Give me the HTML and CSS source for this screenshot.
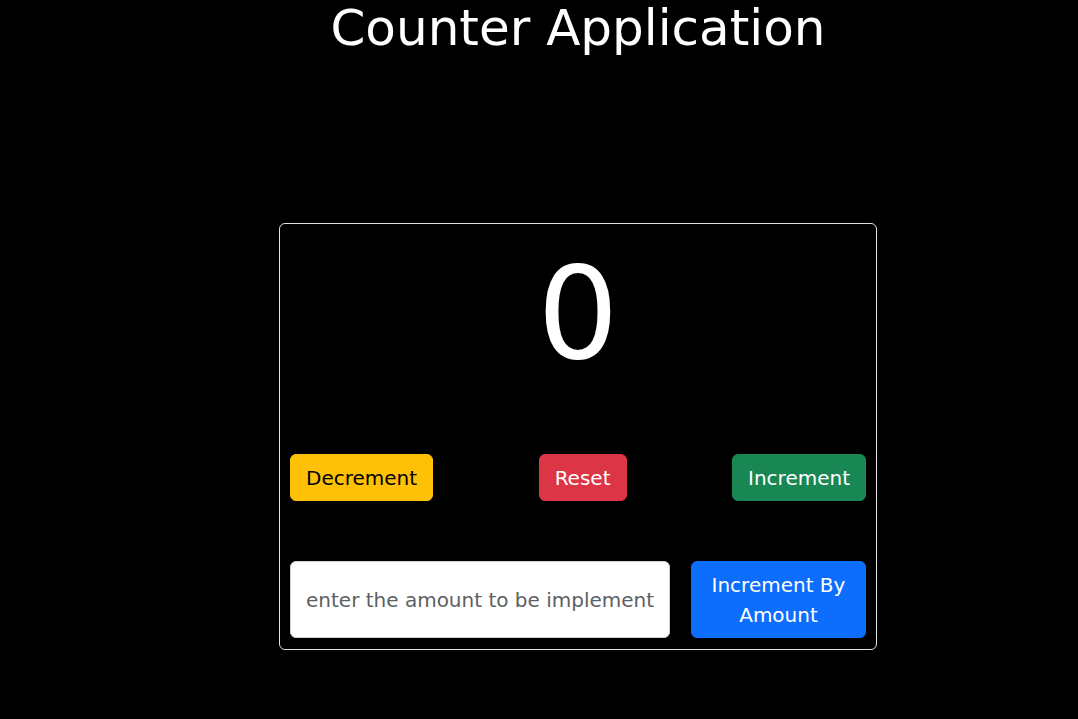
FILE: index.html
```html
<!DOCTYPE html>
<html lang="en">
<head>
<meta charset="utf-8">
<title>Counter Application</title>
<link rel="stylesheet" href="styles.css">
</head>
<body>
<div class="app">
  <h1 class="title">Counter Application</h1>
  <div class="card">
    <div class="count">0</div>
    <div class="controls">
      <button class="btn btn-warning">Decrement</button>
      <button class="btn btn-danger">Reset</button>
      <button class="btn btn-success">Increment</button>
    </div>
    <div class="amount-row">
      <input class="amount-input" type="text" placeholder="enter the amount to be implement">
      <button class="btn btn-primary btn-amount">Increment By Amount</button>
    </div>
  </div>
</div>
</body>
</html>
```

FILE: styles.css
```css
html, body {
  margin: 0;
  padding: 0;
  background: #000;
}

body {
  font-family: "DejaVu Sans", sans-serif;
  color: #fff;
}

.app {
  width: 598px;
  margin-left: 279px;
}

.title {
  margin: 0;
  font-size: 50px;
  font-weight: 400;
  line-height: 56px;
  text-align: center;
  color: #fff;
}

.card {
  margin-top: 167px;
  border: 1px solid #e2e2e2;
  border-radius: 6px;
  padding: 10px 10px 11px;
  display: flex;
  flex-direction: column;
}

.count {
  margin-top: 5px;
  font-size: 128px;
  line-height: 150px;
  text-align: center;
  color: #fff;
}

.controls {
  margin-top: 65px;
  display: flex;
  justify-content: space-between;
}

.btn {
  font-family: "DejaVu Sans", sans-serif;
  font-size: 20px;
  line-height: 30px;
  padding: 8px 15px 7px;
  border: 1px solid transparent;
  border-radius: 6px;
  cursor: pointer;
}

.btn-warning {
  background: #ffc107;
  border-color: #ffc107;
  color: #000;
}

.btn-danger {
  background: #dc3545;
  border-color: #dc3545;
  color: #fff;
}

.btn-success {
  background: #198754;
  border-color: #198754;
  color: #fff;
}

.btn-primary {
  background: #0d6efd;
  border-color: #0d6efd;
  color: #fff;
}

.amount-row {
  margin-top: 60px;
  display: flex;
  gap: 21px;
}

.amount-input {
  flex: 1;
  min-width: 0;
  box-sizing: border-box;
  height: 77px;
  font-family: "DejaVu Sans", sans-serif;
  font-size: 20px;
  padding: 0 15px;
  border: 1px solid #ced4da;
  border-radius: 6px;
  background: #fff;
  color: #212529;
  outline: none;
}

.amount-input::placeholder {
  color: #5c5f63;
}

.btn-amount {
  width: 175px;
  flex: none;
  text-align: center;
}
```
